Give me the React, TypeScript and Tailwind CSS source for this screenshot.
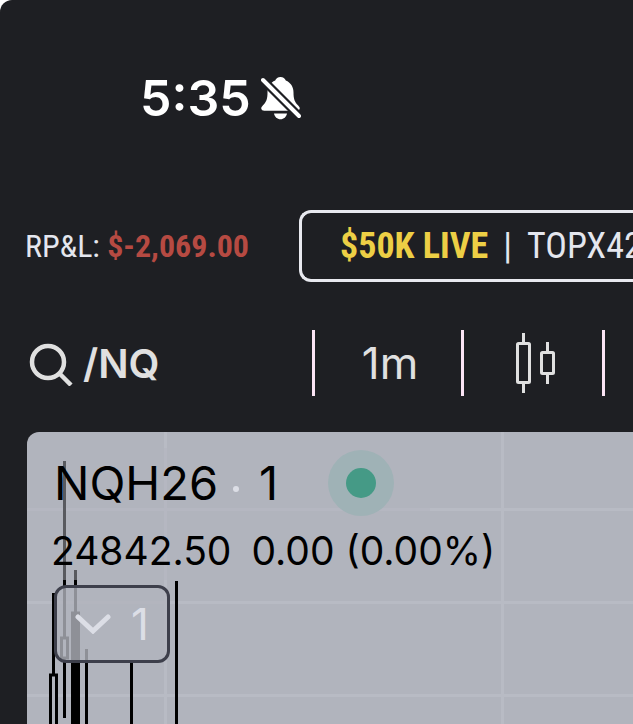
import type { ReactNode } from "react";

interface Candle {
  x: number;
  high: number;
  low: number;
  open?: number;
  close?: number;
  filled?: boolean;
}

const CANDLES: Candle[] = [
  { x: 26, high: 161, low: 320, open: 243, close: 320 },
  { x: 37, high: 29, low: 286, open: 206, close: 226 },
  { x: 48, high: 138, low: 320, open: 181, close: 320, filled: true },
  { x: 59, high: 217, low: 320 },
  { x: 104, high: 231, low: 320 },
  { x: 149, high: 149, low: 320 },
];

const GRID_ROWS = [77, 170, 263];
const GRID_COLS = [138, 475];

function BellOff() {
  return (
    <svg viewBox="0 0 40 44" className="h-11 w-10" aria-hidden="true">
      <path
        fill="#fff"
        d="M19.500 1c-2.600 0-4.700 1.500-5.300 3.600-4.800 2-7.700 6.300-7.700 11.900 0 6.500-1.200 9.500-4.700 13-1.200 1.200-1.800 2.300-1.500 3.300.3 1.300 1.300 2 3 2h32.400c1.700 0 2.700-.7 3-2 .3-1-.3-2.100-1.500-3.300-3.500-3.500-4.700-6.500-4.700-13 0-5.600-2.900-9.900-7.700-11.900C24.200 2.500 22.100 1 19.500 1zM13 37.500h13c-.6 3.400-3.200 5.800-6.500 5.800S13.600 40.900 13 37.500z"
      />
      <path stroke="#1e1f23" strokeWidth="8.500" d="M-1 1l42 42" />
      <path stroke="#fff" strokeWidth="4" strokeLinecap="round" d="M2 4l36 36" />
    </svg>
  );
}

function SearchIcon() {
  return (
    <svg viewBox="0 0 44 44" className="size-11" fill="none" stroke="#e0e0e0" strokeWidth="4.500" aria-hidden="true">
      <circle cx="19" cy="20" r="16" />
      <path d="M30 31l12 12" />
    </svg>
  );
}

function CandlesIcon() {
  return (
    <svg viewBox="0 0 40 60" className="h-15 w-10" fill="none" stroke="#e0e0e0" strokeWidth="3" aria-hidden="true">
      <rect x="1.500" y="10.500" width="12" height="39" rx="1" />
      <path d="M7.500 0v10M7.500 50v10M31.500 9v10M31.500 41v10" />
      <rect x="25.500" y="19.500" width="12" height="21" rx="1" />
    </svg>
  );
}

function Divider() {
  return <div className="h-[66px] w-[3px] shrink-0 bg-[#fbe4f5]" />;
}

function ToolButton({ label, className, children }: { label: string; className: string; children: ReactNode }) {
  return (
    <button type="button" aria-label={label} className={`flex h-[66px] shrink-0 items-center justify-center ${className}`}>
      {children}
    </button>
  );
}

function ChartCanvas() {
  return (
    <svg className="absolute inset-0 size-full" fill="none" stroke="#000" strokeWidth="3" aria-hidden="true">
      <g stroke="#b8bbc4">
        {GRID_ROWS.map((y) => (
          <line key={y} x1="0" x2="100%" y1={y + 0.5} y2={y + 0.5} />
        ))}
        {GRID_COLS.map((x) => (
          <line key={x} x1={x + 0.5} x2={x + 0.5} y1="0" y2="100%" />
        ))}
      </g>
      {CANDLES.map((c) => (
        <g key={c.x}>
          <line x1={c.x + 0.5} x2={c.x + 0.5} y1={c.high} y2={c.low} />
          {c.open !== undefined && c.close !== undefined && (
            <rect x={c.x - 2.5} y={c.open} width="6" height={c.close - c.open} fill={c.filled ? "#000" : "#b1b4bd"} />
          )}
        </g>
      ))}
    </svg>
  );
}

export default function App() {
  return (
    <div className="flex min-h-screen flex-col overflow-hidden rounded-tl-xl bg-[#1e1f23] font-['Inter',sans-serif]">
      <header className="flex h-[196px] items-center gap-2.5 pl-[140px] text-white">
        <span className="text-[50px] leading-[60px] font-semibold">5:35</span>
        <BellOff />
      </header>

      <div className="mt-3.5 flex items-center font-['Roboto_Condensed','Liberation_Sans_Narrow',Roboto,sans-serif] whitespace-nowrap text-[#e4e6ee]">
        <div className="w-[299px] shrink-0 pl-[25px] text-[32px]">
          RP&amp;L: <span className="font-bold text-[#b64a42]">$-2,069.00</span>
        </div>
        <button
          type="button"
          className="flex h-[72px] flex-1 items-center gap-[15px] overflow-hidden rounded-l-xl border-3 border-r-0 border-[#e8e9ef] pl-[38px] text-4xl"
        >
          <span className="font-bold text-[#edcf45]">$50K LIVE</span>
          <span>|</span>
          <span>TOPX42</span>
        </button>
      </div>

      <nav className="mt-12 flex items-center text-[#e0e0e0]">
        <button type="button" className="flex w-[312px] shrink-0 items-center gap-2.5 pt-px pl-[29px] text-[40px] font-semibold">
          <SearchIcon />
          /NQ
        </button>
        <Divider />
        <ToolButton label="Interval 1 minute" className="w-[146px] pl-1 text-[44px]">1m</ToolButton>
        <Divider />
        <ToolButton label="Chart type" className="w-[138px] pl-1.5">
          <CandlesIcon />
        </ToolButton>
        <Divider />
      </nav>

      <main className="relative mt-9 ml-[27px] flex-1 overflow-hidden rounded-tl-xl bg-[#b1b4bd] text-black">
        <ChartCanvas />
        <div className="relative pt-4">
          <div className="flex w-fit items-center bg-[#b1b4bd]/50 pr-9 pl-[27px] text-[47px] leading-[70px]">
            <h1>NQH26</h1>
            <span className="mt-3 mr-5 ml-[15px] size-[6px] rounded-full bg-[#dcdee6]" />
            <span>1</span>
            <span className="ml-[50px] flex size-[66px] items-center justify-center rounded-full bg-[#9fb2b6]">
              <span className="size-[30px] rounded-full bg-[#459a86]" />
            </span>
          </div>
          <p className="flex w-fit gap-5 bg-[#b1b4bd]/50 pt-1 pl-6 text-[39px] leading-[58px]">
            <span>24842.50</span>
            <span>0.00 (0.00%)</span>
          </p>
          <button
            type="button"
            aria-label="Show 1 indicator"
            className="mt-[5px] ml-[27px] flex h-[78px] w-[116px] items-center gap-5 rounded-xl border-3 border-[#3d3f4b] bg-[#b1b4bd]/80 pl-[18px] text-[44px] text-[#dcdee6]"
          >
            <svg viewBox="0 0 36 20" className="h-5 w-9" fill="none" stroke="currentColor" strokeWidth="5" strokeLinecap="round" aria-hidden="true">
              <path d="M3 3l15 14L33 3" />
            </svg>
            1
          </button>
        </div>
      </main>
    </div>
  );
}
